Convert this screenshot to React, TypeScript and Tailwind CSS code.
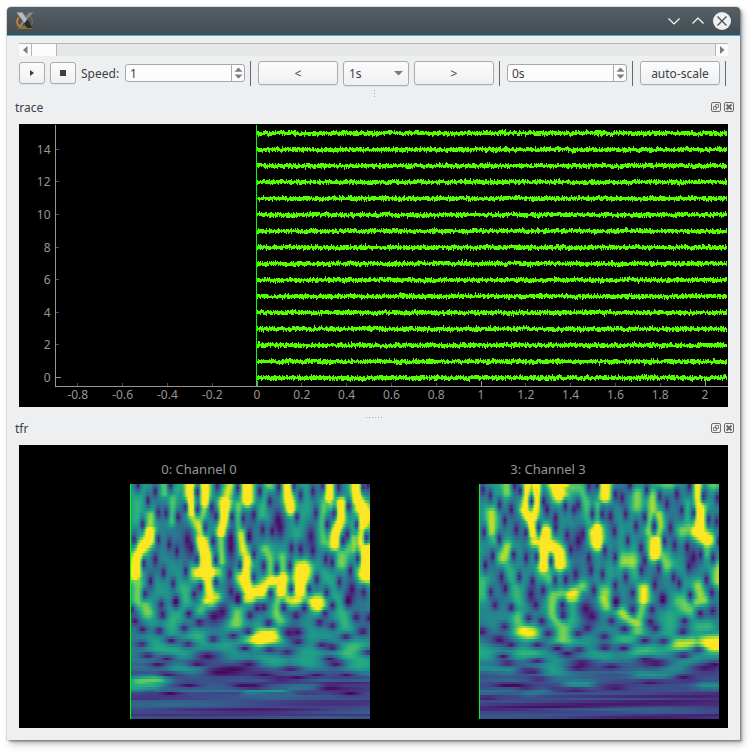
import { useEffect, useRef, type ReactNode } from "react";

type Ridge = [peak: number, width: number, ...points: number[]];
type Tile = { ox: number; oy: number; ridges: Ridge[]; zeros: number[]; wide?: number[] };

const VIRIDIS = [
  [68, 1, 84], [72, 36, 117], [65, 68, 135], [53, 95, 141], [42, 120, 142],
  [33, 145, 140], [34, 168, 132], [68, 191, 112], [122, 209, 81], [189, 223, 38], [253, 231, 37],
];

// Ridge and zero coordinates are in thirds of a pixel, local to each tile.
const CHANNEL_0: Tile[] = [
  {
    ox: -15, oy: -18,
    ridges: [
      [1.5, 15, 70, 160, 70, 185, 50, 205, 35, 240, 28, 290], [0.9, 13, 75, 115, 70, 160], [0.85, 15, 28, 290, 40, 330, 35, 375],
      [1.6, 13, 194, 10, 194, 70, 200, 105], [1.1, 14, 200, 105, 225, 160, 232, 200], [1.7, 18, 225, 190, 238, 240, 240, 290], [1.6, 20, 222, 280, 258, 285],
      [1.2, 16, 245, 290, 250, 330, 260, 375], [1.6, 12, 237, 10, 238, 75], [0.9, 10, 238, 80, 225, 130],
      [1, 11, 316, 15, 300, 65], [1.7, 14, 298, 75, 298, 115, 290, 165], [0.95, 11, 290, 165, 288, 250],
      [0.85, 11, 340, 80, 340, 160], [1.1, 15, 345, 170, 355, 225], [1.4, 16, 365, 245, 350, 295, 372, 340],
      [1.5, 15, 363, 10, 366, 68], [0.8, 11, 118, 10, 118, 45], [0.78, 12, 140, 60, 138, 130], [0.68, 12, 35, 60, 35, 130],
      [0.58, 18, 105, 320, 100, 370], [0.7, 22, 180, 340, 178, 365], [0.65, 14, 170, 20, 150, 40],
    ],
    zeros: [36, 22, 66, 68, 88, 40, 97, 105, 121, 105, 133, 22, 157, 118, 178, 88, 214, 42, 214, 95, 258, 88, 271, 115, 239, 150, 275, 25, 319, 118, 353, 122, 337, 30, 371, 175, 50, 140, 24, 185, 97, 185, 130, 200, 153, 220, 213, 245, 262, 190, 270, 245, 54, 257, 88, 245, 113, 285, 180, 280, 142, 317, 74, 310, 57, 347, 224, 328, 205, 348, 271, 313, 313, 290, 343, 263, 316, 340, 337, 360, 150, 370],
    wide: [185, 185, 197, 210, 315, 180, 316, 210],
  },
  {
    ox: 345, oy: -18,
    ridges: [
      [1.6, 13, 127, 10, 130, 65, 137, 95], [1.5, 12, 251, 10, 252, 60], [0.95, 12, 252, 60, 265, 90], [1.6, 13, 287, 75, 284, 130, 270, 170, 268, 200],
      [1.7, 14, 335, 10, 338, 65, 352, 90], [1.6, 17, 350, 90, 360, 110, 350, 145], [1.2, 12, 350, 150, 350, 200], [1.8, 18, 365, 215, 365, 250, 362, 290],
      [0.85, 13, 65, 10, 75, 25], [0.7, 14, 60, 40, 50, 110], [0.6, 12, 182, 20, 183, 110],
      [1.4, 16, 0, 280, 10, 340, 50, 340, 80, 310, 112, 300, 108, 342], [1, 12, 0, 220, 0, 290], [1.6, 22, 172, 275, 163, 335],
      [0.85, 12, 60, 215, 75, 250, 75, 300], [0.85, 12, 110, 240, 112, 290], [1.2, 15, 200, 370, 228, 370], [0.9, 14, 120, 355, 160, 350, 200, 368],
      [0.8, 13, 240, 70, 232, 120, 236, 190, 265, 210], [0.85, 16, 320, 190, 292, 225, 290, 255], [0.65, 14, 155, 170, 170, 20], [0.9, 12, 325, 180, 328, 215], [0.65, 13, 240, 280, 255, 310],
    ],
    zeros: [43, 40, 73, 70, 25, 110, 100, 28, 146, 25, 166, 52, 155, 118, 52, 155, 80, 160, 11, 175, 203, 40, 212, 105, 203, 220, 138, 210, 166, 215, 25, 230, 55, 265, 94, 272, 134, 265, 25, 297, 75, 345, 138, 333, 192, 333, 214, 305, 232, 25, 280, 28, 311, 85, 267, 105, 246, 140, 294, 190, 307, 170, 334, 140, 364, 178, 354, 28, 369, 22, 338, 243, 242, 245, 261, 253, 316, 278, 283, 313, 244, 345, 310, 365, 356, 343],
    wide: [97, 125, 105, 150, 197, 175, 321, 335],
  },
  {
    ox: -15, oy: 342,
    ridges: [
      [0.85, 15, 55, 18, 65, 42], [0.6, 14, 65, 45, 80, 80], [0.68, 16, 150, 35, 138, 90], [1.2, 13, 270, 0, 245, 8], [0.8, 14, 245, 15, 225, 40],
      [0.88, 15, 335, 35, 330, 75], [1.05, 12, 360, 0, 380, 0], [0.88, 13, 460, 0, 455, 50, 465, 70], [1.1, 16, 490, 5, 520, 5],
      [1.5, 16, 570, 15, 584, 22], [0.7, 14, 630, 5, 655, 50, 660, 90], [1.6, 18, 405, 120, 440, 112], [0.75, 14, 375, 130, 460, 105, 465, 70],
      [0.7, 17, 215, 115, 240, 125], [0.65, 14, 85, 140, 180, 165], [0.62, 13, 190, 150, 300, 138], [0.6, 22, 550, 170, 550, 190],
      [0.74, 19, 685, 150, 670, 165], [0.65, 18, 695, 180, 700, 200], [0.62, 15, 425, 185, 450, 190], [0.6, 12, 160, 210, 210, 215],
      [0.8, 11, 45, 250, 90, 245], [0.65, 10, 30, 266, 80, 262], [0.56, 7, 370, 281, 470, 278], [0.56, 16, 560, 110, 600, 110],
      [0.42, 7, 100, 277, 360, 277], [0.42, 8, 500, 270, 560, 267], [0.36, 7, 420, 292, 490, 290],
    ],
    zeros: [106, 18, 150, 12, 110, 50, 189, 47, 27, 68, 50, 93, 100, 98, 175, 90, 221, 73, 337, 5, 373, 52, 395, 30, 415, 28, 475, 28, 512, 52, 429, 75, 368, 100, 323, 113, 262, 123, 136, 128, 187, 138, 48, 138, 65, 172, 122, 181, 18, 35, 358, 150, 433, 155, 518, 132, 518, 102, 537, 30, 583, 73, 622, 83, 600, 45, 622, 22, 669, 10, 693, 58, 713, 100, 662, 115, 590, 140, 622, 148, 487, 162, 615, 182, 632, 197, 730, 162, 733, 60, 95, 200, 215, 197, 370, 197, 498, 212, 125, 229, 190, 262, 350, 262, 385, 265, 415, 230, 465, 243, 515, 240, 575, 230, 665, 230, 615, 268, 675, 287, 133, 287],
    wide: [265, 55, 290, 40, 490, 105, 245, 175, 325, 212, 285, 222],
  },
];

const CHANNEL_3: Tile[] = [
  {
    ox: -12, oy: -18,
    ridges: [
      [0.85, 12, 92, 10, 93, 45], [1.3, 13, 155, 15, 150, 90], [1.6, 12, 148, 95, 165, 130, 172, 170], [1.6, 11, 180, 10, 182, 70, 172, 125],
      [1.6, 17, 235, 5, 252, 50], [1.4, 15, 235, 10, 262, 15], [0.78, 13, 275, 30, 315, 30, 335, 80, 345, 130], [1.7, 16, 362, 165, 366, 195],
      [0.95, 13, 47, 105, 47, 160], [0.75, 12, 47, 165, 60, 195], [0.94, 16, 95, 210, 82, 240], [0.68, 16, 90, 250, 110, 300],
      [1.7, 15, 208, 162, 205, 205, 204, 265], [1.6, 16, 225, 205, 248, 225, 252, 258], [1.2, 14, 178, 190, 205, 200], [0.8, 18, 205, 280, 225, 300],
      [1.1, 14, 282, 352, 298, 345], [0.85, 14, 320, 325, 290, 345, 235, 352, 232, 375], [0.72, 16, 125, 330, 125, 370], [0.72, 16, 20, 310, 22, 350],
      [0.8, 12, 366, 80, 366, 140],
    ],
    zeros: [21, 35, 43, 52, 71, 80, 86, 128, 106, 95, 133, 38, 116, 22, 167, 70, 203, 70, 214, 95, 239, 120, 239, 150, 269, 85, 295, 95, 308, 80, 340, 25, 364, 22, 350, 108, 24, 162, 70, 183, 121, 155, 150, 165, 189, 150, 274, 172, 322, 168, 285, 215, 50, 235, 28, 262, 113, 230, 151, 240, 182, 238, 226, 250, 340, 240, 346, 277, 300, 290, 77, 297, 130, 297, 170, 310, 238, 307, 270, 305, 202, 338, 355, 338, 44, 342, 88, 332],
    wide: [308, 188, 165, 350],
  },
  {
    ox: 348, oy: -18,
    ridges: [
      [1.6, 14, 28, 10, 28, 55], [1.5, 14, 5, 150, 8, 200], [0.85, 14, 125, 50, 126, 85], [0.93, 13, 172, 55, 172, 100], [0.96, 11, 190, 110, 194, 145, 186, 180],
      [0.92, 9, 165, 110, 160, 160, 175, 185], [1.6, 16, 182, 190, 180, 230], [0.85, 17, 195, 225, 215, 262], [0.8, 14, 200, 18, 230, 18],
      [1.3, 10, 308, 15, 310, 80], [1.7, 14, 314, 85, 314, 150], [1.6, 16, 305, 160, 335, 185], [0.85, 18, 265, 160, 295, 150], [0.7, 14, 275, 80, 280, 130],
      [0.92, 19, 90, 250, 108, 250], [0.82, 13, 350, 15, 360, 25], [0.92, 14, 368, 270, 368, 310], [0.9, 15, 28, 345, 28, 375], [1.05, 15, 145, 335, 145, 365],
      [0.9, 15, 308, 325, 320, 365], [0.8, 14, 255, 370, 265, 375], [0.6, 18, 50, 270, 40, 330], [0.7, 13, 110, 250, 125, 290], [0.8, 12, 335, 190, 335, 225],
    ],
    zeros: [60, 50, 80, 60, 20, 108, 45, 115, 57, 160, 91, 108, 97, 188, 122, 145, 103, 22, 154, 35, 193, 55, 215, 78, 148, 118, 177, 145, 226, 150, 245, 48, 260, 98, 295, 105, 283, 25, 326, 55, 367, 60, 341, 125, 208, 190, 238, 202, 137, 210, 148, 248, 28, 218, 59, 238, 138, 278, 191, 272, 276, 208, 317, 230, 281, 265, 354, 240, 372, 190, 365, 130, 21, 290, 91, 297, 59, 322, 112, 345, 178, 320, 235, 298, 252, 317, 334, 305, 285, 352, 350, 345, 203, 362, 62, 370],
    wide: [295, 240],
  },
  {
    ox: -12, oy: 342,
    ridges: [
      [1.15, 15, 145, 100, 160, 104], [0.8, 14, 125, 55, 135, 90], [0.85, 13, 230, 0, 230, 50, 255, 80], [0.85, 15, 262, 90, 262, 125],
      [0.7, 12, 292, 0, 292, 60, 270, 90], [1.0, 12, 283, 0, 298, 0], [0.95, 14, 386, 0, 392, 20], [0.95, 13, 435, 40, 470, 70, 485, 75], [0.82, 13, 485, 75, 485, 100],
      [1.05, 12, 505, 0, 505, 10], [0.85, 12, 505, 10, 490, 60], [0.65, 17, 585, 60, 585, 100], [0.85, 18, 630, 15, 640, 35], [0.9, 14, 665, 12, 688, 5],
      [0.7, 14, 675, 85, 695, 85], [1.0, 14, 615, 137, 645, 137], [0.92, 10, 645, 137, 700, 137], [1.5, 18, 708, 138, 725, 137],
      [0.74, 15, 490, 160, 510, 158], [0.7, 15, 445, 125, 470, 120], [0.7, 15, 135, 165, 170, 165], [0.62, 18, 235, 190, 235, 215],
      [0.64, 13, 350, 172, 380, 175], [0.63, 15, 600, 205, 650, 180], [0.56, 8, 290, 258, 330, 258], [0.52, 8, 690, 262, 730, 262],
      [0.4, 8, 20, 280, 100, 275], [0.43, 7, 160, 285, 200, 280], [0.52, 9, 20, 210, 100, 215], [0.55, 9, 500, 230, 580, 230], [0.65, 18, 15, 160, 35, 165],
    ],
    zeros: [57, 20, 106, 28, 180, 20, 158, 60, 198, 68, 260, 20, 262, 52, 86, 85, 18, 100, 105, 140, 218, 107, 185, 140, 307, 107, 335, 90, 421, 12, 408, 68, 387, 115, 447, 92, 472, 35, 540, 90, 525, 72, 530, 35, 563, 5, 675, 45, 713, 38, 628, 68, 623, 100, 508, 128, 445, 150, 388, 148, 565, 130, 670, 155, 310, 155, 275, 168, 245, 150, 185, 188, 95, 195, 82, 175, 170, 220, 305, 210, 408, 205, 510, 185, 625, 172, 720, 200, 190, 243, 90, 262, 120, 262, 300, 276, 420, 268, 525, 253, 625, 237, 30, 300],
    wide: [70, 125, 350, 55, 330, 32, 320, 195, 545, 195, 690, 210],
  },
];

function random(seed: number) {
  let s = seed;
  return () => {
    s = (s * 1664525 + 1013904223) >>> 0;
    return s / 4294967296;
  };
}

function segmentDistance(x: number, y: number, p: number[], stretch: number) {
  let best = Infinity;
  for (let i = 0; i + 3 < p.length; i += 2) {
    const ax = p[i] / stretch, ay = p[i + 1], bx = p[i + 2] / stretch, by = p[i + 3];
    const dx = bx - ax, dy = by - ay, px = x / stretch - ax, py = y - ay;
    const t = Math.max(0, Math.min(1, (px * dx + py * dy) / (dx * dx + dy * dy || 1)));
    best = Math.min(best, (px - t * dx) ** 2 + (py - t * dy) ** 2);
  }
  return best;
}

function Spectrogram({ tiles, seed }: { tiles: Tile[]; seed: number }) {
  const ref = useRef<HTMLCanvasElement>(null);
  useEffect(() => {
    const ctx = ref.current?.getContext("2d");
    if (!ctx) return;
    const rnd = random(seed);
    const rows = Array.from({ length: 88 }, () => [rnd(), rnd(), rnd(), rnd()]);
    const ridges = tiles.flatMap((t) =>
      t.ridges.map((r) => ({
        peak: r[0] > 1 ? 1 + (r[0] - 1) * 0.42 : r[0] * 0.96,
        w: r[1],
        p: r.slice(2).map((v, i) => v + (i % 2 ? t.oy : t.ox)),
      })),
    );
    const zeros: number[][] = [];
    tiles.forEach((t) => {
      for (let i = 0; i < t.zeros.length; i += 2) zeros.push([t.zeros[i] + t.ox, t.zeros[i + 1] + t.oy, 1]);
      const w = t.wide ?? [];
      for (let i = 0; i < w.length; i += 2) zeros.push([w[i] + t.ox, w[i + 1] + t.oy, 1.7]);
    });
    const cols = 160;
    for (let r = 0; r < 88; r++) {
      const y = ((r + 0.5) / 88) * 705;
      const low = Math.max(0, Math.min(1, (y - 500) / 110));
      const [a, b, c, d] = rows[r];
      for (let q = 0; q < cols; q++) {
        const x = ((q + 0.5) / cols) * 720;
        const base = 0.49 + 0.05 * Math.sin(x / 37 + y / 90) + 0.03 * Math.sin(x / 19 - y / 60);
        const stripe = 0.11 + 0.16 * a + 0.07 * Math.sin((x / 720) * (2 + 5 * b) + c * 6) + 0.03 * d;
        let v = base * (1 - low) + stripe * low;
        if (y > 545) v = v * 0.75 + 0.04 + 0.05 * Math.sin(y / 9 + x / 160 + seed);
        let best = v;
        const stretch = 1 + Math.max(0, y - 380) / 120;
        for (const k of ridges) {
          const g = Math.exp(-segmentDistance(x, y, k.p, stretch) / (k.w * k.w * 2.1));
          best = Math.max(best, v + (k.peak - v) * g);
        }
        v = best;
        for (const [zx, zy, size] of zeros) {
          const f = Math.max(0, Math.min(1, (zy - 250) / 350));
          const rx = (8.5 + 27 * f * f) * size;
          const ry = (21 - 15 * f) * size;
          const e = ((x - zx) / rx) ** 2 + ((y - zy) / ry) ** 2;
          if (e < 12) v *= 1 - 0.92 * Math.exp(-(e ** 0.75));
        }
        v = Math.max(0.01, Math.min(0.9999, v));
        const i = Math.floor(v * 10), f = v * 10 - i;
        const rgb = VIRIDIS[i].map((n, j) => Math.round(n + (VIRIDIS[i + 1][j] - n) * f));
        ctx.fillStyle = `rgb(${rgb.join(",")})`;
        const y0 = Math.round((r * 235) / 88);
        ctx.fillRect(q * 1.5, y0, 2, Math.round(((r + 1) * 235) / 88) - y0);
      }
    }
  }, [tiles, seed]);
  return <canvas ref={ref} width={240} height={235} className="block h-[235px] w-[240px] border-l border-[#00ff00]" />;
}

const TRACES = Array.from({ length: 16 }, (_, i) => {
  const rnd = random(77 + i * 991);
  const cy = 254 - i * 16.31;
  let d = "";
  let wander = 0;
  for (let x = 238; x < 708; x++) {
    wander = wander * 0.6 + (rnd() - 0.5) * 0.9;
    const top = Math.round(cy + wander - 1 - rnd() * 2.1 - (rnd() > 0.96 ? 1 : 0));
    const bottom = Math.round(cy + wander + 0.8 + rnd() * 2.1 + (rnd() > 0.97 ? 1 : 0));
    d += `M${x + 0.5} ${top}V${bottom}`;
  }
  return d;
});

function TracePlot() {
  const xs = Array.from({ length: 15 }, (_, i) => (i - 4) / 5);
  return (
    <svg width="709" height="283" className="block bg-black font-['Noto_Sans',sans-serif] text-[12px]" fill="#969696">
      <g stroke="#969696" shapeRendering="crispEdges">
        <path d="M36.5 1V262M36 262.5H709" />
        {[0, 2, 4, 6, 8, 10, 12, 14].map((n) => (
          <path key={n} d={`M37 ${253.5 - Math.round(n * 16.31)}h${n ? 3 : 5}`} opacity={n ? 0.55 : 1} />
        ))}
        {xs.map((n) => (
          <path key={n} d={`M${Math.floor(238 + n * 224) + 0.5} 262v${n % 1 ? -3 : -5}`} opacity={n % 1 ? 0.5 : 1} />
        ))}
      </g>
      {[0, 2, 4, 6, 8, 10, 12, 14].map((n) => (
        <text key={n} x="31.5" y={258 - n * 16.31} textAnchor="end">{n}</text>
      ))}
      {xs.map((n) => (
        <text key={n} x={238 + n * 224} y="275" textAnchor="middle">{n}</text>
      ))}
      <path d={TRACES.join("")} stroke="#55ff00" shapeRendering="crispEdges" />
      <path d="M237.5 1V262" stroke="#00ff00" shapeRendering="crispEdges" />
    </svg>
  );
}

function Button({ className, children }: { className: string; children: ReactNode }) {
  return (
    <button className={`flex shrink-0 items-center justify-center rounded-[3px] border border-[#a9abac] bg-linear-to-b from-[#fcfcfc] to-[#eff0f1] shadow-[0_1px_1px_rgba(0,0,0,0.06)] ${className}`}>
      {children}
    </button>
  );
}

function SpinBox({ value }: { value: string }) {
  return (
    <div className="flex h-[18px] w-[120px] shrink-0 rounded-[3px] border border-[#a5a7a8] bg-[#fcfcfc]">
      <span className="flex flex-1 items-center pt-px pl-[4px]">{value}</span>
      <span className="flex w-[13px] items-center justify-end border-l border-[#a9abac] pr-px">
        <svg width="9" height="12" fill="#7b7f82"><path d="M.5 4.8 4.5.5l4 4.3zM.5 7.5l4 4.3 4-4.3z" /></svg>
      </span>
    </div>
  );
}

function Rule() {
  return <div className="h-[25px] w-px shrink-0 bg-[#66696b]" />;
}

function DockTitle({ children }: { children: ReactNode }) {
  return (
    <div className="flex h-[17px] items-center pr-[6px] pl-[8px]">
      <span className="flex-1">{children}</span>
      <svg width="23" height="10" fill="none" stroke="#6c6c69" className="mb-px">
        <rect x=".5" y=".5" width="9" height="9" rx="1.5" />
        <path d="M4.500 2.500h3v3h-3zM2.500 4.500h3v3h-3z" strokeWidth=".8" />
        <rect x="13.500" y=".5" width="9" height="9" rx="1.5" />
        <path d="m15.500 2.500 5 5m0-5-5 5" strokeWidth="2" />
      </svg>
    </div>
  );
}

function Channel({ title, tiles, seed }: { title: string; tiles: Tile[]; seed: number }) {
  return (
    <div className="flex w-[342px] flex-col items-end">
      <h2 className="h-[24px] w-full text-center text-[13px] leading-[18px] text-[#969696]">{title}</h2>
      <Spectrogram tiles={tiles} seed={seed} />
    </div>
  );
}

export default function App() {
  return (
    <div className="h-[753px] w-[753px] overflow-hidden bg-white p-[7px] font-['Noto_Sans',sans-serif] text-[12px] leading-[16px] text-[#3b4045]">
      <div className="h-[733px] w-[733px] overflow-hidden rounded-t-[4px] bg-[#eeeff1] shadow-[0_0_0_1px_rgba(0,0,0,0.12),2px_2px_2px_rgba(0,0,0,0.25),3px_4px_7px_rgba(0,0,0,0.25)]">
        <header className="flex h-[29px] items-center border-b border-[#3daee9] bg-linear-to-b from-[#566068] to-[#434c51] pr-[9px] pl-[9px]">
          <svg width="18" height="20" viewBox="0 0 18 20" fill="none">
            <ellipse cx="9" cy="10.500" rx="7.500" ry="6.500" stroke="#8a6a3c" strokeWidth="1.2" />
            <path d="M2.500 15Q-.5 10.500 2.500 6.500" stroke="#ef7d20" strokeWidth="1.500" />
            <path d="M1.500 18 4 15h10l3 3z" fill="#8d742a" />
            <path d="m7 10 4-2 5.500 9h-5.500z" fill="#2d2b29" />
            <path d="M13 1.500h4.500L10 9.500 4.500 16H2z" fill="#85898b" />
            <path d="M.5 1.500h6l4.500 7-2.500 3.500z" fill="#b7babb" />
          </svg>
          <svg width="66" height="20" viewBox="0 0 66 20" fill="none" stroke="#fcfcfc" className="ml-auto">
            <path d="m3.500 7.500 5.500 5.500 5.500-5.500M27.500 12.500l5.500-5.500 5.500 5.500" strokeWidth="1.2" />
            <circle cx="57" cy="10" r="9" fill="#eff0f1" stroke="none" />
            <path d="m52.500 5.500 9 9m0-9-9 9" stroke="#475057" strokeWidth="1.3" />
          </svg>
        </header>
        <div className="mt-[7px] ml-[12px] flex h-[13px] w-[709px] border-t border-[#b3b6b5] bg-[#e5e8e6]">
          <span className="flex w-[12px] items-center justify-center bg-[#fafafa]">
            <svg width="5" height="8" fill="#777b7e"><path d="M4.500 0v8L0 4z" /></svg>
          </span>
          <span className="w-[26px] border-x border-[#b3b6b5] bg-[#fcfcfc]" />
          <span className="ml-auto flex w-[13px] items-center justify-center border-l border-[#b3b6b5] bg-[#fafafa]">
            <svg width="5" height="8" fill="#777b7e"><path d="M0 0v8l4.500-4z" /></svg>
          </span>
        </div>
        <div className="mt-[4px] ml-[12px] flex h-[26px] items-center">
          <Button className="h-[22px] w-[26px]"><svg width="5" height="6" fill="#3b4045"><path d="M0 0v6l4-3z" /></svg></Button>
          <Button className="ml-[5px] h-[22px] w-[26px]"><span className="size-[6px] bg-[#3b4045]" /></Button>
          <span className="ml-[5px] w-[44px] shrink-0 pt-px">Speed:</span>
          <SpinBox value="1" />
          <div className="ml-[5px]"><Rule /></div>
          <Button className="ml-[7px] h-[24px] w-[80px] pt-px">&lt;</Button>
          <Button className="ml-[5px] h-[25px] w-[66px] px-[5px] pt-px">
            <span className="flex-1 text-left">1s</span>
            <svg width="9" height="5" fill="#777b7e"><path d="M0 0h9L4.500 4.500z" /></svg>
          </Button>
          <Button className="ml-[5px] h-[24px] w-[80px] pt-px">&gt;</Button>
          <div className="mr-[7px] ml-[5px]"><Rule /></div>
          <SpinBox value="0s" />
          <div className="mr-[7px] ml-[5px]"><Rule /></div>
          <Button className="h-[24px] w-[80px] pt-px">auto-scale</Button>
          <div className="ml-[5px]"><Rule /></div>
        </div>
        <div className="flex h-[13px] flex-col items-center gap-[2px] pt-[4px] pl-px">
          <i className="size-px bg-[#a8a9aa]" /><i className="size-px bg-[#a8a9aa]" /><i className="size-px bg-[#a8a9aa]" />
        </div>
        <DockTitle>trace</DockTitle>
        <div className="mt-[8px] ml-[12px]"><TracePlot /></div>
        <div className="flex h-[13px] items-end justify-center gap-[2px] pb-[2px] pl-px">
          {[0, 1, 2, 3, 4, 5].map((n) => <i key={n} className="size-px bg-[#a8a9aa]" />)}
        </div>
        <DockTitle>tfr</DockTitle>
        <section className="mt-[8px] ml-[12px] flex h-[283px] w-[709px] gap-[7px] bg-black pt-[15px] pl-[9px]">
          <Channel title="0: Channel 0" tiles={CHANNEL_0} seed={3} />
          <Channel title="3: Channel 3" tiles={CHANNEL_3} seed={11} />
        </section>
      </div>
    </div>
  );
}
